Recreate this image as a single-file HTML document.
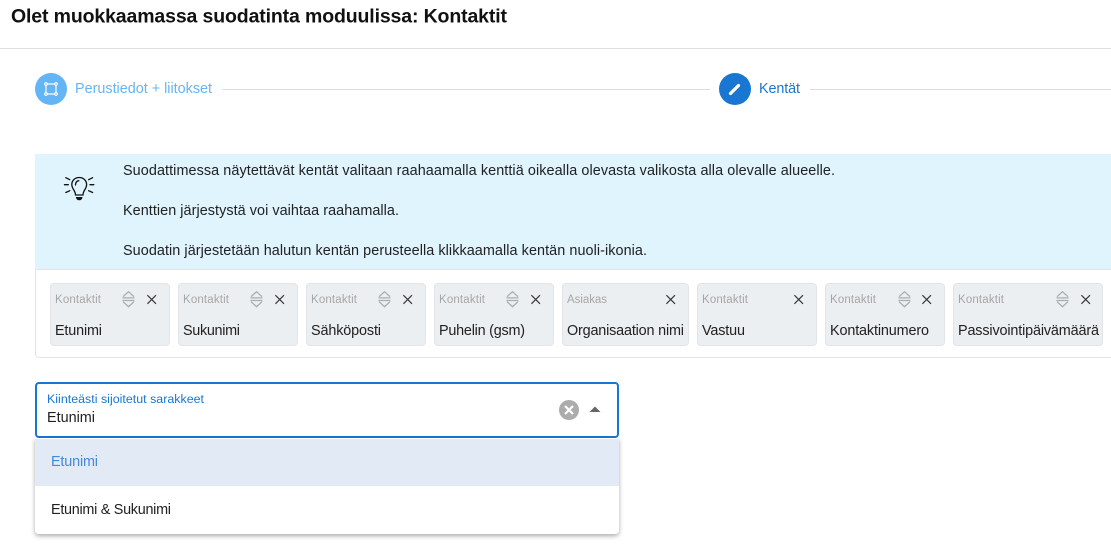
<!DOCTYPE html>
<html lang="fi">
<head>
<meta charset="utf-8">
<title>Suodatin</title>
<style>
html,body{margin:0;padding:0;background:#fff;width:1111px;height:544px;overflow:hidden}
svg{display:block}
text{font-family:"Liberation Sans",sans-serif;font-size:14.4px;fill:#212121}
.s{font-size:11.5px;fill:#a6a6a6}
</style>
</head>
<body>
<svg width="1111" height="544" viewBox="0 0 1111 544" xmlns="http://www.w3.org/2000/svg">
<defs>
<filter id="sh" x="-5%" y="-10%" width="110%" height="125%"><feDropShadow dx="0" dy="2" stdDeviation="2.5" flood-color="#000" flood-opacity=".33"/></filter>
<g id="sort" fill="none" stroke="#a9acae" stroke-width="1.3"><path d="M-5.5 -2.5 L0 -7.5 L5.500 -2.5"/><path d="M-5.500 2.500 L0 7.500 L5.500 2.500"/><path d="M-6 -1.300H6M-6 1.300H6"/></g>
<path id="x" d="M-4.300 -4.300L4.300 4.300M4.300 -4.300L-4.300 4.300" fill="none" stroke="#333" stroke-width="1.1"/>
</defs>
<rect width="1111" height="544" fill="#fff"/>
<text x="11" y="22.700" font-weight="700" style="font-size:19.500px;fill:#111" textLength="496" lengthAdjust="spacing">Olet muokkaamassa suodatinta moduulissa: Kontaktit</text>
<rect x="0" y="48" width="1111" height="1" fill="#e0e0e0"/>

<circle cx="51" cy="89" r="16" fill="#64b5f6"/>
<rect x="46" y="84" width="10" height="10" fill="none" stroke="#fff" stroke-width="1.200"/>
<g fill="#64b5f6" stroke="#fff" stroke-width="1.100"><circle cx="46" cy="84" r="1.300"/><circle cx="56" cy="84" r="1.300"/><circle cx="46" cy="94" r="1.300"/><circle cx="56" cy="94" r="1.300"/></g>
<text x="75" y="93" style="fill:#64b5f6" textLength="137" lengthAdjust="spacing">Perustiedot + liitokset</text>
<rect x="222" y="89" width="488" height="1" fill="#dcdcdc"/>
<circle cx="735" cy="89" r="16" fill="#1976d2"/>
<path d="M730.500 93.500L738.500 85.500" stroke="#fff" stroke-width="3.200" stroke-linecap="round"/>
<text x="759" y="93" style="fill:#1976d2" textLength="41" lengthAdjust="spacing">Kentät</text>
<rect x="810" y="89" width="301" height="1" fill="#dcdcdc"/>

<rect x="35" y="154" width="1076" height="115" fill="#e0f4fe"/>
<g fill="none" stroke="#111" stroke-width="1.300" stroke-linecap="round">
<path d="M75.500 195C75.500 190.500 71.800 189 71.800 184.500C71.800 180.500 75 177.500 79.200 177.500C83.400 177.500 86.600 180.500 86.600 184.500C86.600 189 83 190.500 83 195Z"/>
<path d="M75.500 185C75.500 182.500 76.800 181 78.800 180.700"/>
<path d="M65.800 177.700L69.800 179.700M92.600 177.700L88.600 179.700M64.500 184.700H68.300M90 184.700H93.800M65.800 192.500L69.800 190.700M92.600 192.500L88.600 190.700"/>
</g>
<path d="M75.800 197H82.600Q82 200.300 79.200 200.300Q76.400 200.300 75.800 197Z" fill="#111"/>
<text x="123" y="175" textLength="712" lengthAdjust="spacing">Suodattimessa näytettävät kentät valitaan raahaamalla kenttiä oikealla olevasta valikosta alla olevalle alueelle.</text>
<text x="123" y="215" textLength="276" lengthAdjust="spacing">Kenttien järjestystä voi vaihtaa raahamalla.</text>
<text x="123" y="255" textLength="524" lengthAdjust="spacing">Suodatin järjestetään halutun kentän perusteella klikkaamalla kentän nuoli-ikonia.</text>

<path d="M1111 269.500H35.500V354a3.500 3.500 0 0 0 3.500 3.500H1111" fill="#fff" stroke="#e4e4e4"/>

<g fill="#eceff1" stroke="#e2e4e6">
<rect x="50.500" y="283.500" width="119" height="62" rx="3.500"/>
<rect x="178.500" y="283.500" width="119" height="62" rx="3.500"/>
<rect x="306.500" y="283.500" width="119" height="62" rx="3.500"/>
<rect x="434.500" y="283.500" width="119" height="62" rx="3.500"/>
<rect x="562.500" y="283.500" width="126" height="62" rx="3.500"/>
<rect x="697.500" y="283.500" width="119" height="62" rx="3.500"/>
<rect x="825.500" y="283.500" width="119" height="62" rx="3.500"/>
<rect x="953.500" y="283.500" width="149" height="62" rx="3.500"/>
</g>

<text class="s" x="55" y="303" textLength="46" lengthAdjust="spacing">Kontaktit</text>
<text class="s" x="183" y="303" textLength="46" lengthAdjust="spacing">Kontaktit</text>
<text class="s" x="311" y="303" textLength="46" lengthAdjust="spacing">Kontaktit</text>
<text class="s" x="439" y="303" textLength="46" lengthAdjust="spacing">Kontaktit</text>
<text class="s" x="567" y="303" textLength="40" lengthAdjust="spacing">Asiakas</text>
<text class="s" x="702" y="303" textLength="46" lengthAdjust="spacing">Kontaktit</text>
<text class="s" x="830" y="303" textLength="46" lengthAdjust="spacing">Kontaktit</text>
<text class="s" x="958" y="303" textLength="46" lengthAdjust="spacing">Kontaktit</text>

<text x="55" y="335" textLength="47" lengthAdjust="spacing">Etunimi</text>
<text x="183" y="335" textLength="57" lengthAdjust="spacing">Sukunimi</text>
<text x="311" y="335" textLength="70" lengthAdjust="spacing">Sähköposti</text>
<text x="439" y="335" textLength="86" lengthAdjust="spacing">Puhelin (gsm)</text>
<text x="567" y="335" textLength="117" lengthAdjust="spacing">Organisaation nimi</text>
<text x="702" y="335" textLength="43" lengthAdjust="spacing">Vastuu</text>
<text x="830" y="335" textLength="99" lengthAdjust="spacing">Kontaktinumero</text>
<text x="958" y="335" textLength="141" lengthAdjust="spacing">Passivointipäivämäärä</text>

<use href="#sort" x="128.500" y="299.200"/><use href="#x" x="151.700" y="299.500"/>
<use href="#sort" x="256.500" y="299.200"/><use href="#x" x="279.700" y="299.500"/>
<use href="#sort" x="384.500" y="299.200"/><use href="#x" x="407.700" y="299.500"/>
<use href="#sort" x="512.500" y="299.200"/><use href="#x" x="535.700" y="299.500"/>
<use href="#x" x="670.700" y="299.500"/>
<use href="#x" x="798.700" y="299.500"/>
<use href="#sort" x="904.500" y="299.200"/><use href="#x" x="926.700" y="299.500"/>
<use href="#sort" x="1062.500" y="299.200"/><use href="#x" x="1085.700" y="299.500"/>

<rect x="36" y="383" width="582" height="54" rx="3" fill="#fff" stroke="#1976d2" stroke-width="2"/>
<text x="47" y="403" style="font-size:12.400px;fill:#1976d2" textLength="157" lengthAdjust="spacing">Kiinteästi sijoitetut sarakkeet</text>
<text x="47" y="422" textLength="48" lengthAdjust="spacing">Etunimi</text>
<circle cx="569" cy="410" r="10" fill="#acacac"/>
<path d="M565 406L573 414M573 406L565 414" stroke="#fff" stroke-width="2.200"/>
<path d="M589.500 412L595 406.500L600.500 412Z" fill="#666"/>

<path d="M35 438H619V530a4 4 0 0 1 -4 4H39a4 4 0 0 1 -4 -4Z" fill="#fff" filter="url(#sh)"/>
<rect x="35" y="439" width="584" height="47" fill="#e2ebf5"/>
<text x="51" y="466" style="fill:#3f8bd8" textLength="47" lengthAdjust="spacing">Etunimi</text>
<text x="51" y="514" textLength="120" lengthAdjust="spacing">Etunimi &amp; Sukunimi</text>
</svg>
</body>
</html>
